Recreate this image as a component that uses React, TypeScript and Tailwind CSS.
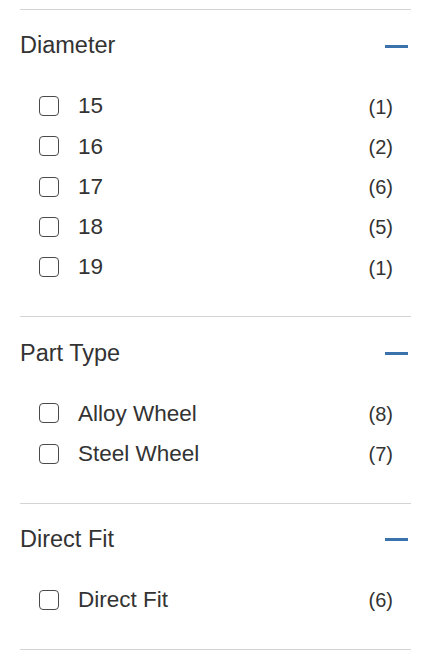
const sections = [
  {
    title: "Diameter",
    items: [
      { label: "15", count: 1 },
      { label: "16", count: 2 },
      { label: "17", count: 6 },
      { label: "18", count: 5 },
      { label: "19", count: 1 },
    ],
  },
  {
    title: "Part Type",
    items: [
      { label: "Alloy Wheel", count: 8 },
      { label: "Steel Wheel", count: 7 },
    ],
  },
  {
    title: "Direct Fit",
    items: [{ label: "Direct Fit", count: 6 }],
  },
];

const FilterSection = ({ title, items }: (typeof sections)[number]) => {
  return (
    <div className="border-t border-[#d4d4d4] pb-[29px]">
      {/* Header */}
      <button className="flex h-[72px] w-full items-center justify-between pr-[3px] text-left font-['Liberation_Sans',Arial,sans-serif]">
        <span className="text-[23.5px] leading-none text-[#333333]">{title}</span>
        <span className="block h-[3px] w-[23px] bg-[#3a72ad]" />
      </button>

      {/* Options */}
      <ul className="mt-[4px]">
        {items.map((item) => (
          <li key={item.label} className="flex h-[40.25px] items-center pl-[19px] pr-[18px]">
            <span className="h-[20px] w-[20px] shrink-0 rounded-[4px] border-[1.5px] border-[#4a4a4a] bg-white" />
            <span className="ml-[19px] flex-1 pt-px text-[22.5px] leading-none text-[#333333]">{item.label}</span>
            <span className="pt-px text-[20px] leading-none text-[#333333]">({item.count})</span>
          </li>
        ))}
      </ul>
    </div>
  );
};

export default function App() {
  return (
    <div className="min-h-screen bg-white pl-5 pr-[13px] pt-[9px] font-['Liberation_Sans',Arial,sans-serif]">
      {sections.map((s) => (
        <FilterSection key={s.title} {...s} />
      ))}
      <div className="border-t border-[#d4d4d4]" />
    </div>
  );
}
